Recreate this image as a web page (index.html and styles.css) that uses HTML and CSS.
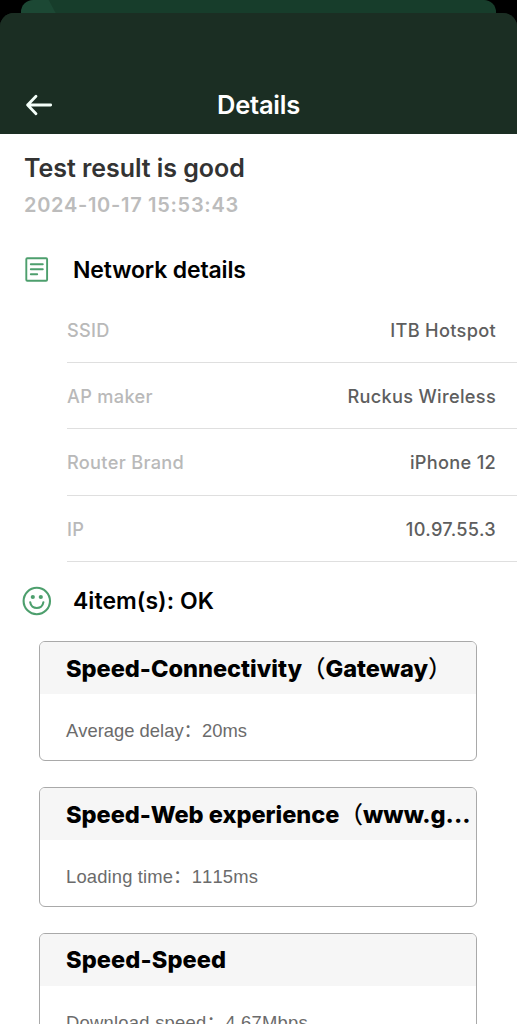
FILE: index.html
```html
<!DOCTYPE html>
<html lang="en">
<head>
<meta charset="utf-8">
<title>Details</title>
<link rel="stylesheet" href="styles.css">
</head>
<body>
<div class="backdrop"><div class="back-sheet"></div></div>
<main class="sheet">
  <header class="nav">
    <svg class="back" width="28" height="22" viewBox="0 0 28 22" fill="none" stroke="#f4fff9" stroke-width="2.8" stroke-linecap="round" stroke-linejoin="round"><path d="M11 2.3 2.6 11 11 19.7M2.6 11H25.7"/></svg>
    <h1 class="nav-title"><span>Details</span></h1>
  </header>
  <section class="summary">
    <div class="result"><span>Test result is good</span></div>
    <div class="date"><span>2024-10-17 15:53:43</span></div>
  </section>
  <div class="section-head">
    <svg class="icon" width="30" height="30" viewBox="0 0 30 30" fill="none" stroke="#4d9f6d" stroke-width="1.9" stroke-linecap="round"><rect x="4.3" y="3.2" width="20.8" height="22.6" rx="1"/><path d="M8.8 9.2H20.8M8.8 14.2H20.8M8.8 19.2H15.2"/></svg>
    <h2 class="heading network"><span>Network details</span></h2>
  </div>
  <div class="rows">
    <div class="row"><span class="label">SSID</span><span class="value">ITB Hotspot</span></div>
    <div class="row"><span class="label">AP maker</span><span class="value">Ruckus Wireless</span></div>
    <div class="row"><span class="label">Router Brand</span><span class="value">iPhone 12</span></div>
    <div class="row"><span class="label">IP</span><span class="value">10.97.55.3</span></div>
  </div>
  <div class="section-head items-head">
    <svg class="icon" width="30" height="30" viewBox="0 0 30 30" fill="none" stroke="#4d9f6d" stroke-width="2.1" stroke-linecap="round"><circle cx="14.8" cy="15" r="13.2"/><path d="M8.2 16.2C9.1 24 20.5 24 21.4 16.2"/><circle cx="10.8" cy="11" r="2.1" fill="#4d9f6d" stroke="none"/><circle cx="18.8" cy="11" r="2.1" fill="#4d9f6d" stroke="none"/></svg>
    <h2 class="heading items"><span>4item(s): OK</span></h2>
  </div>
  <div class="cards">
    <article class="card">
      <h3 class="card-title"><span>Speed-Connectivity<span class="paren">（</span>Gateway<span class="paren">）</span></span></h3>
      <p class="metric"><span>Average delay<span class="colon">：</span>20ms</span></p>
    </article>
    <article class="card">
      <h3 class="card-title"><span>Speed-Web experience<span class="paren">（</span>www.g...</span></h3>
      <p class="metric loading"><span>Loading time<span class="colon">：</span>1115ms</span></p>
    </article>
    <article class="card">
      <h3 class="card-title plain"><span>Speed-Speed</span></h3>
      <p class="metric download"><span>Download speed<span class="colon">：</span>4.67Mbps</span></p>
    </article>
  </div>
</main>
</body>
</html>
```
FILE: styles.css
```css
* { box-sizing: border-box; }
html, body { margin: 0; height: 1024px; overflow: hidden; }
body { background: #000; font-family: Inter, "Noto Sans CJK SC", sans-serif; display: flex; flex-direction: column; }
h1, h2, h3, p { margin: 0; white-space: nowrap; }
.backdrop { height: 13px; flex: none; padding: 0 21px; }
.back-sheet { height: 13px; border-radius: 12px 12px 0 0; background: linear-gradient(62deg, #1c4834 0 30px, #173d2b 31px); }
.sheet { flex: none; height: 1011px; overflow: hidden; background: linear-gradient(#1b2e23 0 100px, #fff 100px); border-radius: 14px 14px 0 0; }
.nav { height: 121px; padding: 62px 25px 0; background: #1b2e23; display: grid; grid-template-columns: 28px 1fr 28px; align-items: center; }
.nav-title { text-align: center; font-size: 25.5px; line-height: 58px; font-weight: 600; letter-spacing: -0.25px; color: #fff; }
.summary { height: 106px; padding: 15px 24px 0; }
.result { font-size: 25px; line-height: 38px; font-weight: 600; letter-spacing: -0.05px; color: #333; }
.date { font-size: 20px; line-height: 36px; font-weight: 600; letter-spacing: 0.7px; color: #bcbcbc; }
.section-head { display: flex; align-items: center; gap: 21px; height: 60px; padding-left: 22px; }
.icon { flex: none; }
.heading { font-size: 23px; font-weight: 600; letter-spacing: -0.15px; color: #000; }
.items { letter-spacing: 0.05px; }
.rows { padding-left: 67px; height: 274px; margin-top: -3px; }
.row { display: flex; justify-content: space-between; height: 66.2px; padding: 0 21px 0 0; line-height: 66px; font-size: 18.2px; font-weight: 540; border-bottom: 1px solid #dfdfdf; }
.label { letter-spacing: 0.3px; color: #b9b9b9; }
.value { letter-spacing: 0.3px; color: #5e5e5e; }
.cards { padding: 10px 40px 0 39px; display: grid; gap: 26px; }
.card { height: 120px; border: 1.5px solid #a9a9a9; border-radius: 6px; overflow: hidden; }
.card-title { height: 52px; padding-left: 26px; background: #f6f6f6; font-size: 23.6px; line-height: 50px; font-weight: 800; letter-spacing: -0.03px; color: #000; }
.plain { line-height: 51px; letter-spacing: 0.1px; }
.paren { font-family: "Noto Sans CJK SC", sans-serif; font-weight: 500; }
.metric { padding-left: 26px; font-family: "Liberation Sans", Arial, sans-serif; font-size: 18.4px; line-height: 70px; font-kerning: none; color: #6b6b6b; }
.loading { letter-spacing: 0.15px; }
.download { letter-spacing: 0.25px; }
.colon { font-family: "Noto Sans CJK SC", sans-serif; }
```
